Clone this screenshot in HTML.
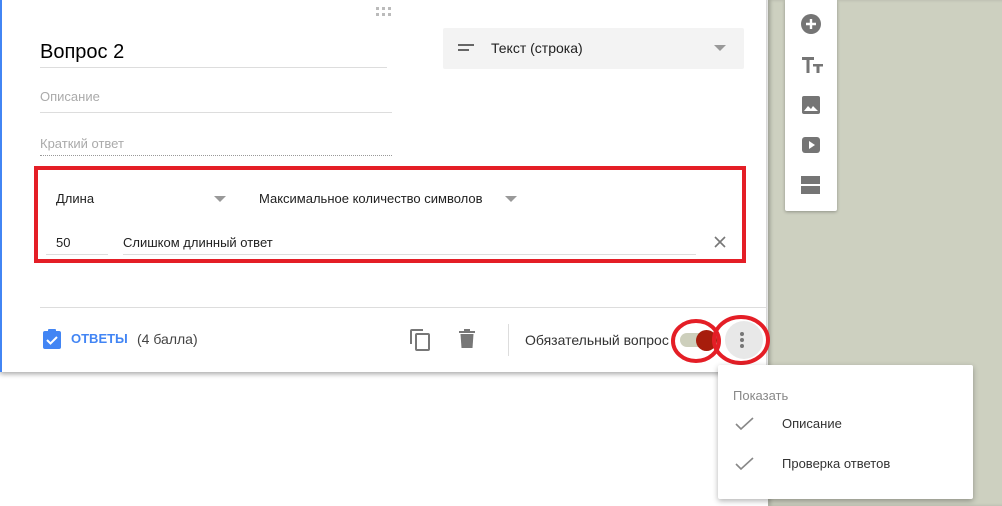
<!DOCTYPE html>
<html><head><meta charset="utf-8"><style>
*{margin:0;padding:0;box-sizing:border-box}
body{width:1002px;height:506px;overflow:hidden;background:#fff;font-family:"Liberation Sans","DejaVu Sans",sans-serif;position:relative}
.bg{position:absolute;left:768px;top:0;width:234px;height:506px;background:#cdd0c0;box-shadow:inset 3px 0 3px rgba(0,0,0,.15)}
.card{position:absolute;left:0;top:-10px;width:766px;height:382px;background:#fff;border-left:2px solid #4285f4;box-shadow:0 2px 5px rgba(0,0,0,.35)}
.a{position:absolute}
.t{color:#212121}
.line{position:absolute;height:1px;background:#ddd}
.side{position:absolute;left:785px;top:0;width:52px;height:211px;background:#fff;border-radius:0 0 2px 2px;box-shadow:0 1px 3px rgba(0,0,0,.3)}
.menu{position:absolute;left:718px;top:365px;width:255px;height:134px;background:#fff;border-radius:2px;box-shadow:0 2px 6px rgba(0,0,0,.3)}
</style></head><body>
<div class="bg"></div>
<div class="card"></div>
<!-- drag dots -->
<svg class="a" style="left:374px;top:5px" width="18" height="12"><g fill="#bbb"><rect x="2" y="2" width="3" height="3"/><rect x="8" y="2" width="3" height="3"/><rect x="14" y="2" width="3" height="3"/><rect x="2" y="8" width="3" height="3"/><rect x="8" y="8" width="3" height="3"/><rect x="14" y="8" width="3" height="3"/></g></svg>
<div class="a t" style="left:40px;top:41px;font-size:20px;color:#000">Вопрос 2</div>
<div class="line" style="left:40px;top:67px;width:347px"></div>
<div class="a" style="left:40px;top:89px;font-size:13px;color:#aaa">Описание</div>
<div class="line" style="left:40px;top:112px;width:352px"></div>
<div class="a" style="left:40px;top:136px;font-size:13px;color:#aaa">Краткий ответ</div>
<div class="a" style="left:40px;top:155px;width:352px;border-top:1px dotted #999"></div>
<!-- type dropdown -->
<div class="a" style="left:443px;top:28px;width:301px;height:41px;background:#f3f3f3;border-radius:2px"></div>
<svg class="a" style="left:458px;top:43px" width="18" height="10"><rect x="0" y="1" width="16" height="2" fill="#666"/><rect x="0" y="6" width="11" height="2" fill="#666"/></svg>
<div class="a t" style="left:491px;top:40px;font-size:14px">Текст (строка)</div>
<svg class="a" style="left:714px;top:45px" width="12" height="7"><path d="M0 0h12L6 6z" fill="#999"/></svg>
<!-- validation -->
<div class="a t" style="left:56px;top:191px;font-size:13px">Длина</div>
<svg class="a" style="left:214px;top:196px" width="12" height="7"><path d="M0 0h12L6 6z" fill="#999"/></svg>
<div class="a t" style="left:259px;top:191px;font-size:13px">Максимальное количество символов</div>
<svg class="a" style="left:505px;top:196px" width="12" height="7"><path d="M0 0h12L6 6z" fill="#999"/></svg>
<div class="a t" style="left:56px;top:235px;font-size:13px">50</div>
<div class="line" style="left:46px;top:254px;width:62px"></div>
<div class="a t" style="left:123px;top:235px;font-size:13px">Слишком длинный ответ</div>
<div class="line" style="left:123px;top:254px;width:573px"></div>
<svg class="a" style="left:714px;top:236px" width="12" height="12"><path d="M1 1L11 11M11 1L1 11" stroke="#777" stroke-width="1.6"/></svg>
<div class="a" style="left:34px;top:166px;width:712px;height:97px;border:4px solid #e41e26"></div>
<!-- footer -->
<div class="line" style="left:40px;top:307px;width:726px"></div>
<svg class="a" style="left:42px;top:329px" width="20" height="20"><rect x="1" y="2" width="18" height="18" rx="2" fill="#4285f4"/><rect x="6" y="0" width="8" height="4" rx="1" fill="#4285f4"/><path d="M5 11l3.5 3.5L15 8" stroke="#fff" stroke-width="2" fill="none"/></svg>
<div class="a" style="left:71px;top:331px;font-size:13px;color:#4285f4;font-weight:bold">ОТВЕТЫ</div>
<div class="a" style="left:137px;top:331px;font-size:14px;color:#444">(4 балла)</div>
<svg class="a" style="left:409px;top:328px" width="22" height="24"><path d="M2 16V3a1 1 0 0 1 1-1h11" stroke="#777" stroke-width="2" fill="none"/><rect x="7" y="6" width="13" height="16" rx="1" stroke="#777" stroke-width="2" fill="none"/></svg>
<svg class="a" style="left:458px;top:329px" width="18" height="20"><rect x="1" y="2" width="16" height="2" fill="#777"/><rect x="6" y="0" width="6" height="3" fill="#777"/><path d="M2.5 5h13l-1 14h-11z" fill="#777"/></svg>
<div class="a" style="left:508px;top:324px;width:1px;height:32px;background:#ddd"></div>
<div class="a" style="left:525px;top:332px;font-size:14px;color:#333;width:148px;overflow:hidden;white-space:nowrap">Обязательный вопрос</div>
<div class="a" style="left:680px;top:333px;width:34px;height:14px;border-radius:7px;background:#cdcfbc"></div>
<div class="a" style="left:696px;top:330px;width:21px;height:21px;border-radius:50%;background:#a71d0c"></div>
<div class="a" style="left:725px;top:321px;width:38px;height:38px;border-radius:50%;background:#e8e8e8"></div>
<svg class="a" style="left:739px;top:331px" width="6" height="18"><circle cx="3" cy="3" r="2" fill="#777"/><circle cx="3" cy="9" r="2" fill="#777"/><circle cx="3" cy="15" r="2" fill="#777"/></svg>
<svg class="a" style="left:660px;top:305px" width="120" height="70"><ellipse cx="36" cy="36" rx="23" ry="20" stroke="#e41e26" stroke-width="4" fill="none"/><ellipse cx="81" cy="35" rx="27" ry="23" stroke="#e41e26" stroke-width="4" fill="none"/></svg>
<!-- side toolbar -->
<div class="side"></div>
<svg class="a" style="left:801px;top:14px" width="20" height="20"><circle cx="10" cy="10" r="10" fill="#757575"/><path d="M10 5v10M5 10h10" stroke="#fff" stroke-width="2.4"/></svg>
<svg class="a" style="left:801px;top:56px" width="22" height="18"><path d="M1 1h12v3H8.5v13h-3V4H1z M12 8h10v2.5h-3.5V17h-3v-6.5H12z" fill="#757575"/></svg>
<svg class="a" style="left:801px;top:95px" width="20" height="20"><rect x="1" y="1" width="18" height="18" rx="2" fill="#757575"/><path d="M3 16l4-5 3 3 2-3 5 5z" fill="#fff"/></svg>
<svg class="a" style="left:801px;top:136px" width="20" height="18"><rect x="1" y="1" width="18" height="16" rx="3" fill="#757575"/><path d="M8 5v8l6-4z" fill="#fff"/></svg>
<svg class="a" style="left:801px;top:175px" width="20" height="20"><rect x="0" y="1" width="19" height="8" fill="#757575"/><rect x="0" y="11" width="19" height="8" fill="#757575"/></svg>
<!-- menu -->
<div class="menu"></div>
<div class="a" style="left:733px;top:388px;font-size:13px;color:#888">Показать</div>
<svg class="a" style="left:735px;top:416px" width="20" height="16"><path d="M1 8l5 5L18 2" stroke="#888" stroke-width="1.6" fill="none"/></svg>
<div class="a" style="left:782px;top:416px;font-size:13px;color:#333">Описание</div>
<svg class="a" style="left:735px;top:456px" width="20" height="16"><path d="M1 8l5 5L18 2" stroke="#888" stroke-width="1.6" fill="none"/></svg>
<div class="a" style="left:782px;top:456px;font-size:13px;color:#333">Проверка ответов</div>
</body></html>
